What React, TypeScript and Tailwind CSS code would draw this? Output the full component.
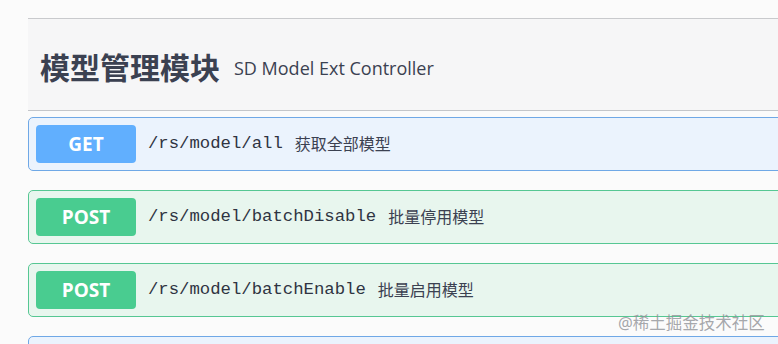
const sans = '"Open Sans", "Noto Sans", "Noto Sans CJK SC", sans-serif';
const cjk = '"Noto Sans", "Noto Sans CJK SC", sans-serif';
const mono = '"Liberation Mono", "Noto Sans CJK SC", monospace';

type Op = { method: 'GET' | 'POST'; path: string; summary: string };

const ops: Op[] = [
  { method: 'GET', path: '/rs/model/all', summary: '获取全部模型' },
  { method: 'POST', path: '/rs/model/batchDisable', summary: '批量停用模型' },
  { method: 'POST', path: '/rs/model/batchEnable', summary: '批量启用模型' },
  { method: 'GET', path: '/rs/model/list', summary: '分页查询模型' },
];

function OpBlock({ op }: { op: Op }) {
  const isGet = op.method === 'GET';
  return (
    <div
      className={`mb-[19px] flex items-center rounded-[5px] border p-[7px] ${
        isGet ? 'border-[#6fa8e6] bg-[#ebf3fd]' : 'border-[#56c793] bg-[#e8f6ee]'
      }`}
    >
      <div
        className={`flex h-[38px] w-[100px] items-center justify-center rounded-[4px] text-[19px] font-bold text-white ${
          isGet ? 'bg-[#61affe]' : 'bg-[#49cc90]'
        }`}
        style={{ fontFamily: sans }}
      >
        {op.method}
      </div>
      <span className="ml-[12px] text-[17.3px] text-[#2f3442]" style={{ fontFamily: mono }}>
        {op.path}
      </span>
      <span className="ml-[12px] text-[16px] text-[#3b4151]" style={{ fontFamily: cjk }}>
        {op.summary}
      </span>
    </div>
  );
}

export default function App() {
  return (
    <div className="relative h-[344px] w-[778px] overflow-hidden bg-[#fbfbfb]">
      <div className="w-[900px] pl-[28px] pt-[18px]">
        <div className="border-t border-[#c9cacd]" />
        {/* Tag header */}
        <div className="flex h-[92px] items-center border-b border-[#c4c6ca] bg-[#f6f6f7] pl-[12px] pt-[6px]">
          <h3 className="text-[30px] font-bold text-[#3b4151]" style={{ fontFamily: cjk }}>
            模型管理模块
          </h3>
          <span className="ml-[14px] mt-[2px] text-[18px] text-[#3b4151]" style={{ fontFamily: sans }}>
            SD Model Ext Controller
          </span>
        </div>
        <div className="pt-[6px]">
          {ops.map((op, i) => (
            <OpBlock key={i} op={op} />
          ))}
        </div>
      </div>
      <div
        className="absolute left-[618px] top-[311px] text-[16.5px] text-[#8f9196]/80"
        style={{ fontFamily: cjk }}
      >
        @稀土掘金技术社区
      </div>
    </div>
  );
}
